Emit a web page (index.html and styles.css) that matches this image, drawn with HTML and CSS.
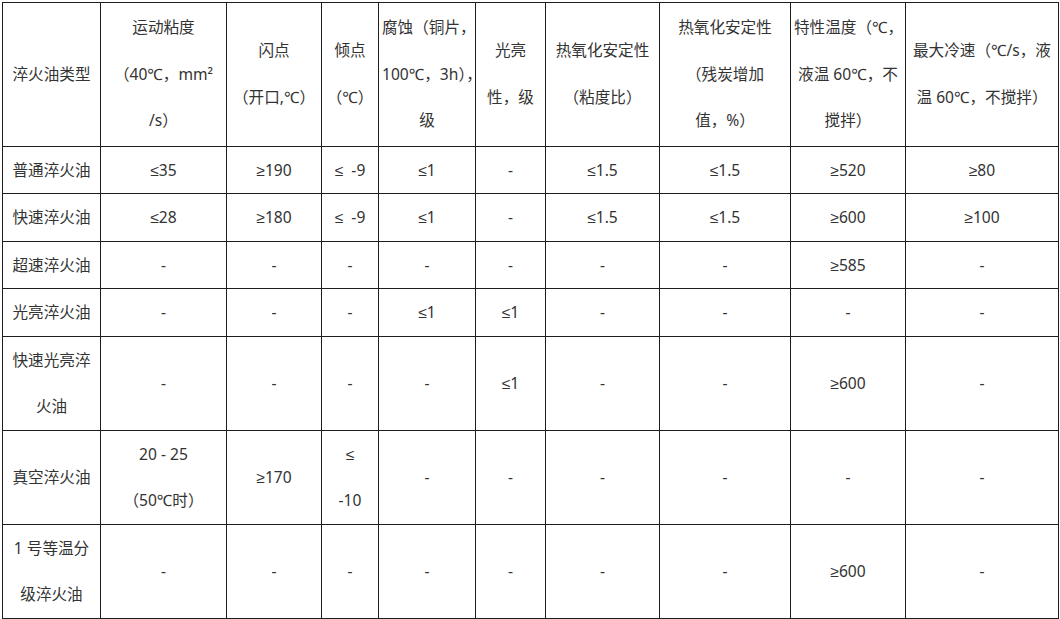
FILE: index.html
```html
<!DOCTYPE html>
<html lang="zh-CN">
<head>
<meta charset="utf-8">
<title>淬火油性能</title>
<link rel="stylesheet" href="styles.css">
</head>
<body>
<table class="spec">
  <colgroup>
    <col class="c1"><col class="c2"><col class="c3"><col class="c4"><col class="c5">
    <col class="c6"><col class="c7"><col class="c8"><col class="c9"><col class="c10">
  </colgroup>
  <thead>
    <tr class="head">
      <th>淬火油类型</th>
      <th>运动粘度<br>（40℃，mm²<br>/s）</th>
      <th>闪点<br>（开口,℃）</th>
      <th>倾点<br>（℃）</th>
      <th>腐蚀（铜片，<br>100℃，3h），<br>级</th>
      <th>光亮<br>性，级</th>
      <th>热氧化安定性<br>（粘度比）</th>
      <th>热氧化安定性<br>（残炭增加<br>值，%）</th>
      <th>特性温度（℃，<br>液温 60℃，不<br>搅拌）</th>
      <th>最大冷速（℃/s，液<br>温 60℃，不搅拌）</th>
    </tr>
  </thead>
  <tbody>
    <tr>
      <td>普通淬火油</td><td>≤35</td><td>≥190</td><td>≤&nbsp; -9</td><td>≤1</td><td>-</td><td>≤1.5</td><td>≤1.5</td><td>≥520</td><td>≥80</td>
    </tr>
    <tr>
      <td>快速淬火油</td><td>≤28</td><td>≥180</td><td>≤&nbsp; -9</td><td>≤1</td><td>-</td><td>≤1.5</td><td>≤1.5</td><td>≥600</td><td>≥100</td>
    </tr>
    <tr>
      <td>超速淬火油</td><td>-</td><td>-</td><td>-</td><td>-</td><td>-</td><td>-</td><td>-</td><td>≥585</td><td>-</td>
    </tr>
    <tr>
      <td>光亮淬火油</td><td>-</td><td>-</td><td>-</td><td>≤1</td><td>≤1</td><td>-</td><td>-</td><td>-</td><td>-</td>
    </tr>
    <tr>
      <td>快速光亮淬<br>火油</td><td>-</td><td>-</td><td>-</td><td>-</td><td>≤1</td><td>-</td><td>-</td><td>≥600</td><td>-</td>
    </tr>
    <tr>
      <td>真空淬火油</td><td>20 - 25<br>（50℃时）</td><td>≥170</td><td>≤<br>-10</td><td>-</td><td>-</td><td>-</td><td>-</td><td>-</td><td>-</td>
    </tr>
    <tr>
      <td>1 号等温分<br>级淬火油</td><td>-</td><td>-</td><td>-</td><td>-</td><td>-</td><td>-</td><td>-</td><td>≥600</td><td>-</td>
    </tr>
  </tbody>
</table>
</body>
</html>
```
FILE: styles.css
```css
html, body {
  margin: 0;
  padding: 0;
  background: #ffffff;
}

body {
  padding: 2px 0 0 2px;
  font-family: "Noto Sans", "Liberation Sans", "Noto Sans CJK SC", sans-serif;
  font-size: 15.6px;
  color: #333333;
}

.spec {
  border-collapse: collapse;
  table-layout: fixed;
  width: 1056px;
  border: 1px solid #8a8a8a;
}

.spec th,
.spec td {
  border: 1px solid #1e1e1e;
  padding: 0 3px;
  text-align: center;
  vertical-align: middle;
  font-weight: normal;
  line-height: 46.5px;
  white-space: nowrap;
}

.spec .head th {
  padding-top: 1px;
  padding-bottom: 2px;
}

.c1 { width: 98px; }
.c2 { width: 126px; }
.c3 { width: 95px; }
.c4 { width: 57px; }
.c5 { width: 97px; }
.c6 { width: 70px; }
.c7 { width: 114px; }
.c8 { width: 131px; }
.c9 { width: 115px; }
.c10 { width: 153px; }
```
